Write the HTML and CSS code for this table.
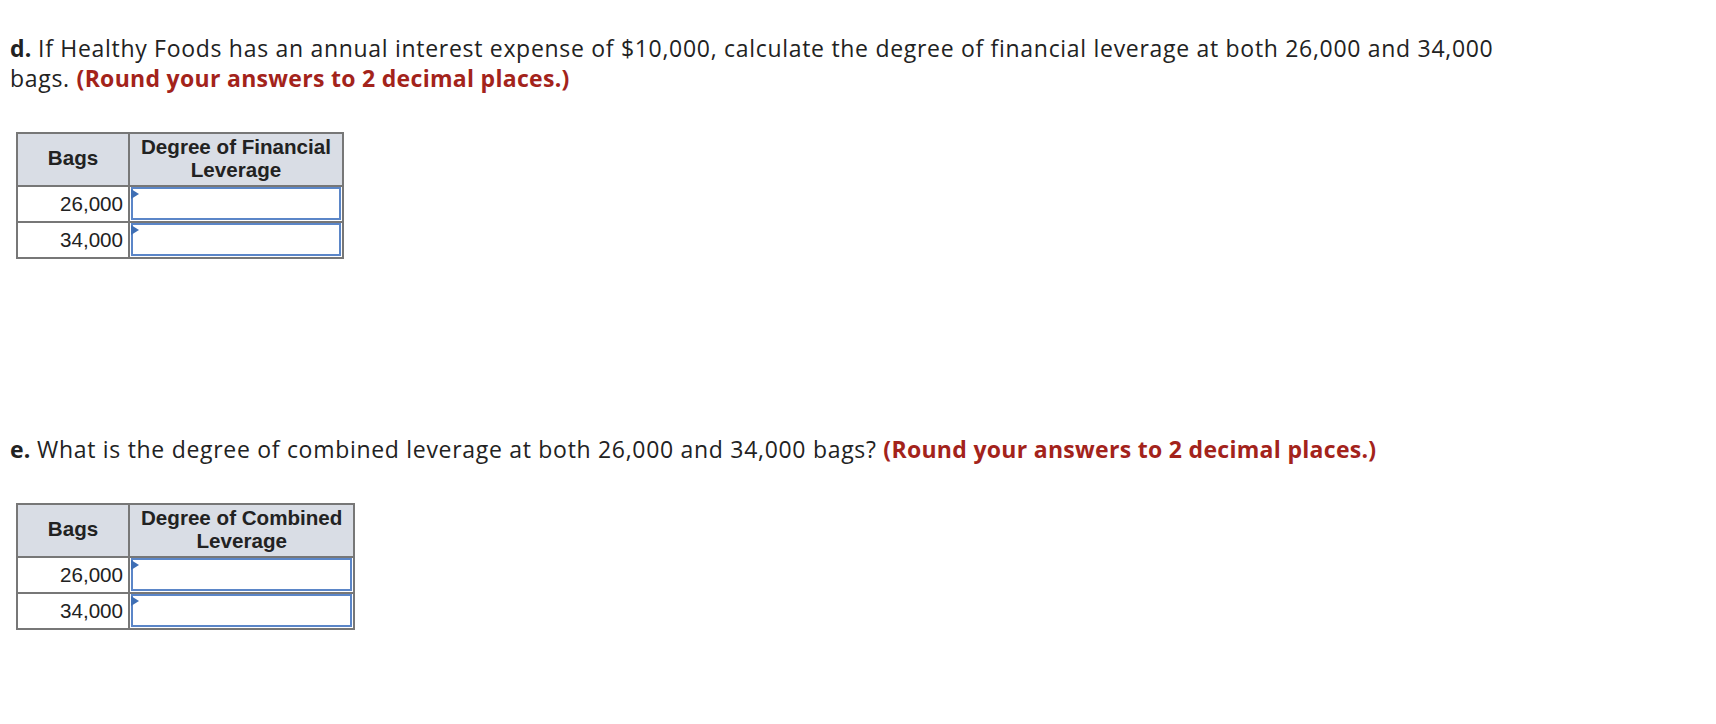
FILE: index.html
```html
<!DOCTYPE html>
<html lang="en">
<head>
<meta charset="utf-8">
<title>Leverage</title>
<link rel="stylesheet" href="styles.css">
</head>
<body>
<main class="page">
  <section class="question">
    <p class="prompt"><b>d.</b> If Healthy Foods has an annual interest expense of $10,000, calculate the degree of financial leverage at both 26,000 and 34,000 bags. <span class="hint">(Round your answers to 2 decimal places.)</span></p>
    <table class="grid">
      <thead>
        <tr><th class="col-bags">Bags</th><th class="col-val">Degree of Financial<br>Leverage</th></tr>
      </thead>
      <tbody>
        <tr><td class="num">26,000</td><td class="entry"><span class="field"></span></td></tr>
        <tr><td class="num">34,000</td><td class="entry"><span class="field"></span></td></tr>
      </tbody>
    </table>
  </section>
  <section class="question question-e">
    <p class="prompt"><b>e.</b> What is the degree of combined leverage at both 26,000 and 34,000 bags? <span class="hint">(Round your answers to 2 decimal places.)</span></p>
    <table class="grid">
      <thead>
        <tr><th class="col-bags">Bags</th><th class="col-val">Degree of Combined<br>Leverage</th></tr>
      </thead>
      <tbody>
        <tr><td class="num">26,000</td><td class="entry"><span class="field"></span></td></tr>
        <tr><td class="num">34,000</td><td class="entry"><span class="field"></span></td></tr>
      </tbody>
    </table>
  </section>
</main>
</body>
</html>
```

FILE: styles.css
```css
html, body {
  margin: 0;
  padding: 0;
  background: #ffffff;
}

.page {
  padding: 0 0 0 10px;
  font-family: "Open Sans", "Liberation Sans", sans-serif;
  color: #222222;
}

.question {
  display: flex;
  flex-direction: column;
  align-items: flex-start;
}

.prompt {
  margin: 33px 0 0 0;
  max-width: 1515px;
  font-size: 23px;
  line-height: 30px;
  letter-spacing: 0.7px;
}

.prompt b {
  font-weight: 700;
  letter-spacing: 0.1px;
}

.hint {
  color: #a3231b;
  font-weight: 700;
  letter-spacing: 0.3px;
}

.question-e .prompt {
  margin-top: 175px;
}

.grid {
  margin: 39px 0 0 6px;
  border-collapse: collapse;
  border: 2px solid #777777;
  font-family: "Liberation Sans", Arial, sans-serif;
  font-size: 20.6px;
  letter-spacing: 0;
  color: #222222;
}

.grid th {
  background: #d9dde5;
  border: 2px solid #777777;
  font-weight: 700;
  line-height: 23px;
  height: 53px;
  padding: 0 11px 4px 11px;
  box-sizing: border-box;
}

.grid .col-bags {
  width: 112px;
}

.grid td {
  border: 2px solid #777777;
  height: 36px;
  padding: 0;
  box-sizing: border-box;
}

.grid .num {
  text-align: right;
  padding-right: 5px;
}

.grid .entry {
  padding: 0 1px 1px 1px;
  vertical-align: top;
  position: relative;
}

.field {
  display: block;
  height: 33px;
  box-sizing: border-box;
  border: 2px solid #5b86c8;
  background: #ffffff;
}

.entry::before {
  content: "";
  position: absolute;
  left: 1px;
  top: 2px;
  width: 0;
  height: 0;
  border-top: 5px solid transparent;
  border-bottom: 5px solid transparent;
  border-left: 8px solid #3f6fb5;
}
```
